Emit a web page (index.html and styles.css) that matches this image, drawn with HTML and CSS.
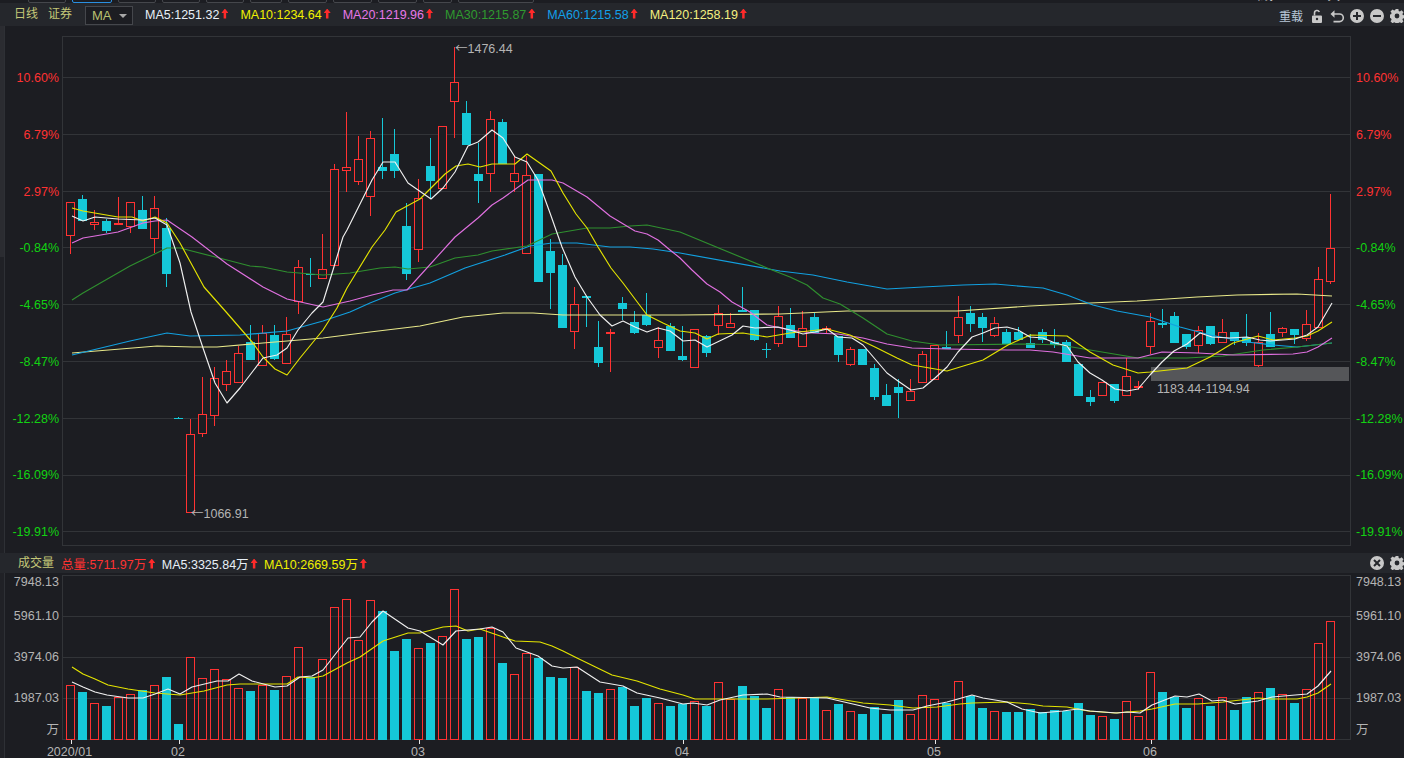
FILE: index.html
```html
<!DOCTYPE html>
<html>
<head>
    <meta charset="UTF-8">
    <title>日线 证券</title>
    <link rel="stylesheet" href="styles.css">
</head>
<body>
    <svg class="defs">
        <symbol id="ico-gear" viewBox="0 0 14 14">
            <path fill-rule="evenodd" d="M5.6 0h2.8l.3 1.900 1.200.5 1.600-1.100 2 2-1.100 1.600.5 1.200 1.900.3v2.800l-1.900.3-.5 1.200 1.100 1.600-2 2-1.600-1.100-1.200.5-.3 1.900H5.600l-.3-1.900-1.200-.5-1.600 1.100-2-2 1.100-1.600-.5-1.200L-.8 8.400V5.600l1.900-.3.5-1.200-1.100-1.600 2-2 1.600 1.100 1.200-.5zM7 4.600a2.400 2.400 0 1 0 0 4.800 2.400 2.400 0 0 0 0-4.800z"/>
        </symbol>
    </svg>

    <div class="tabstrip">
        <div class="tabs">
            <span class="tab">分时</span>
            <span class="tab active">日线</span>
            <span class="tab">周线</span>
            <span class="tab">月线</span>
            <span class="tab">季线</span>
            <span class="tab small">年线</span>
            <span class="tab mid">5分</span>
            <span class="tab mid">15分</span>
            <span class="tab mid">30分</span>
            <span class="tab tiny">60分</span>
            <span class="tab wide">多周期图</span>
        </div>
        <div class="tab-right">
            <span>画线</span>
            <span>工具</span>
        </div>
    </div>

    <div class="toolbar">
        <span class="title">日线</span>
        <span class="title">证券</span>
        <div class="select">MA<i class="caret"></i></div>
        <div class="legend">
            <span class="c-ma5">MA5:1251.32<i class="up"></i></span>
            <span class="c-ma10">MA10:1234.64<i class="up"></i></span>
            <span class="c-ma20">MA20:1219.96<i class="up"></i></span>
            <span class="c-ma30">MA30:1215.87<i class="up"></i></span>
            <span class="c-ma60">MA60:1215.58<i class="up"></i></span>
            <span class="c-ma120">MA120:1258.19<i class="up"></i></span>
        </div>
        <div class="tools top">
            <span class="reload">重载</span>
            <svg class="ico" viewBox="0 0 14 14"><path d="M3 6.500h8a1 1 0 0 1 1 1V13a1 1 0 0 1-1 1H3a1 1 0 0 1-1-1V7.500a1 1 0 0 1 1-1z"/><path class="line" d="M4.500 6.500V4a2.500 2.500 0 0 1 4.800-1"/><circle class="hole" cx="7" cy="10" r="1.200"/></svg>
            <svg class="ico" viewBox="0 0 14 14"><path class="line" d="M3 5h6.500a3.800 3.800 0 0 1 0 7.600H3.500"/><path d="M4.500 1.200v7.600L.5 5z"/></svg>
            <svg class="ico" viewBox="0 0 14 14"><path fill-rule="evenodd" d="M7 0a7 7 0 1 1 0 14A7 7 0 0 1 7 0zM6 3v3H3v2h3v3h2V8h3V6H8V3z"/></svg>
            <svg class="ico" viewBox="0 0 14 14"><path fill-rule="evenodd" d="M7 0a7 7 0 1 1 0 14A7 7 0 0 1 7 0zM3 6v2h8V6z"/></svg>
            <svg class="ico"><use href="#ico-gear"/></svg>
        </div>
    </div>

    <div class="panel">
        <div class="rail"><div class="thumb"></div></div>
        <div class="axis left">
            <span class="red">10.60%</span>
            <span class="red">6.79%</span>
            <span class="red">2.97%</span>
            <span class="green">-0.84%</span>
            <span class="green">-4.65%</span>
            <span class="green">-8.47%</span>
            <span class="green">-12.28%</span>
            <span class="green">-16.09%</span>
            <span class="green">-19.91%</span>
        </div>
        <svg class="chart" id="priceChart" viewBox="62 36 1289 510"></svg>
        <div class="axis right">
            <span class="red">10.60%</span>
            <span class="red">6.79%</span>
            <span class="red">2.97%</span>
            <span class="green">-0.84%</span>
            <span class="green">-4.65%</span>
            <span class="green">-8.47%</span>
            <span class="green">-12.28%</span>
            <span class="green">-16.09%</span>
            <span class="green">-19.91%</span>
        </div>
    </div>

    <div class="toolbar volbar">
        <span class="title">成交量</span>
        <div class="legend">
            <span class="c-total">总量:5711.97万<i class="up"></i></span>
            <span class="c-ma5">MA5:3325.84万<i class="up"></i></span>
            <span class="c-ma10">MA10:2669.59万<i class="up"></i></span>
        </div>
        <div class="tools">
            <svg class="ico" viewBox="0 0 14 14"><path fill-rule="evenodd" d="M7 0a7 7 0 1 1 0 14A7 7 0 0 1 7 0zM4.700 3.300 3.300 4.700 5.600 7 3.300 9.300l1.400 1.400L7 8.400l2.300 2.300 1.400-1.400L8.400 7l2.300-2.300-1.400-1.400L7 5.600z"/></svg>
            <svg class="ico"><use href="#ico-gear"/></svg>
        </div>
    </div>

    <div class="panel volume">
        <div class="rail"></div>
        <div class="vol-axis left">
            <span>7948.13</span>
            <span>5961.10</span>
            <span>3974.06</span>
            <span>1987.03</span>
            <span>万</span>
        </div>
        <svg class="chart" id="volumeChart" viewBox="62 575 1289 183"></svg>
        <div class="vol-axis right">
            <span>7948.13</span>
            <span>5961.10</span>
            <span>3974.06</span>
            <span>1987.03</span>
            <span>万</span>
        </div>
    </div>

    <script src="app.js"></script>
</body>
</html>
```

FILE: styles.css
```css
* {
    margin: 0;
    padding: 0;
    box-sizing: border-box;
}

body {
    width: 1404px;
    height: 758px;
    overflow: hidden;
    background: #1c1d22;
    color: #b4b4b4;
    font-family: "Liberation Sans", "Noto Sans CJK SC", sans-serif;
    font-size: 12.500px;
}

.defs {
    display: none;
}

/* tab row, only the bottom edge is in view */
.tabstrip {
    height: 3px;
    overflow: hidden;
    display: flex;
    justify-content: space-between;
    background: #1c1d22;
    color: #d0d0d0;
}
.tabs {
    display: flex;
    gap: 6px;
    padding-left: 28px;
    margin-top: -17px;
    height: 20px;
}
.tab {
    width: 38px;
    height: 20px;
    line-height: 19px;
    text-align: center;
    font-size: 12px;
    border: 1px solid #45474c;
    border-radius: 2px;
}
.tab.active {
    border-color: #2a8fe0;
    width: 40px;
}
.tab.mid {
    width: 39px;
}
.tab.small {
    width: 32px;
}
.tab.tiny {
    width: 29px;
}
.tab.wide {
    width: 76px;
}
.tab-right {
    display: flex;
    gap: 42px;
    padding-right: 64px;
    margin-top: -15px;
}

.toolbar {
    height: 23px;
    display: flex;
    align-items: center;
    background: #25272c;
    padding-left: 14px;
}
.title {
    color: #c4c878;
    margin-right: 10px;
    font-size: 12px;
    line-height: 23px;
}
.select {
    width: 48px;
    height: 19px;
    margin: 1px 12px 0 3px;
    padding-left: 6px;
    line-height: 18px;
    font-size: 13px;
    color: #b8c070;
    background: #1c1d22;
    border: 1px solid #45474c;
    position: relative;
}
.caret {
    position: absolute;
    right: 5px;
    top: 7px;
    border: 4.500px solid transparent;
    border-top-color: #a8a8a8;
    border-bottom: 0;
}
.legend {
    display: flex;
    gap: 12px;
    white-space: nowrap;
}
.up {
    display: inline-block;
    width: 7px;
    height: 10px;
    margin-left: 2px;
    background: #ff2a2a;
    clip-path: polygon(50% 0, 100% 45%, 68% 45%, 68% 100%, 32% 100%, 32% 45%, 0 45%);
}
.c-ma5 { color: #e8f0f8; }
.c-ma10 { color: #f0f000; }
.c-ma20 { color: #e878e8; }
.c-ma30 { color: #2f9a2f; }
.c-ma60 { color: #12a0e8; }
.c-ma120 { color: #f4f080; }
.c-total { color: #ff3232; }

.tools {
    margin-left: auto;
    display: flex;
    align-items: center;
    gap: 6px;
}
.tools.top {
    padding-top: 2px;
}
.reload {
    color: #b8c8d8;
    font-size: 12px;
    margin-right: 1px;
}
.ico {
    width: 14px;
    height: 14px;
    fill: #c8c8c8;
    overflow: visible;
}
.ico .line {
    fill: none;
    stroke: #c8c8c8;
    stroke-width: 1.600;
}
.ico .hole {
    fill: #25272c;
}

.panel {
    height: 527px;
    padding: 10px 0 7px;
    display: flex;
}
.rail {
    width: 5px;
    margin: -10px 0 -7px;
    background: #202126;
    border-right: 1px solid #2e3035;
}
.thumb {
    width: 4px;
    height: 231px;
    background: #2b2c31;
}
.chart {
    display: block;
    width: 1289px;
    height: 510px;
    flex: none;
    overflow: visible;
}

.axis {
    display: flex;
    flex-direction: column;
    gap: 36.750px;
    padding-top: 32px;
    line-height: 20px;
}
.axis span {
    height: 20px;
}
.axis.left,
.vol-axis.left {
    width: 57px;
    padding-right: 3px;
    text-align: right;
}
.axis.right,
.vol-axis.right {
    padding-left: 5px;
    white-space: nowrap;
}
.red { color: #ff3232; }
.green { color: #12d212; }

.volume {
    height: 185px;
    padding: 2px 0 0;
}
.volume .rail {
    margin: -2px 0 0;
}
.volume .chart {
    height: 183px;
}
.vol-axis {
    display: flex;
    flex-direction: column;
    line-height: 20px;
    gap: 21px;
    margin-top: -3px;
}
.vol-axis span {
    height: 20px;
}
.vol-axis span:first-child {
    margin-bottom: -7px;
}
.vol-axis span:last-child {
    margin-top: -9px;
}

.volbar {
    height: 20px;
    padding-left: 18px;
}
.volbar .title {
    margin-right: 7px;
    line-height: 20px;
}
.volbar .legend {
    gap: 6.500px;
}

.note {
    font-size: 12.500px;
    fill: #b4b4b4;
}
.note-arrow {
    font-family: "Noto Sans CJK SC", sans-serif;
}
```

FILE: app.js
```js
// every y and x below is in page pixels, the svg viewBox keeps them valid
const NS = 'http://www.w3.org/2000/svg';
const FIRST_X = 70.5;
const STEP = 12;

const RED = '#ff3232';
const CYAN = '#15c8d8';
const BG = '#1c1d22';
const GRID = '#323438';

// type, body top, body bottom, wick high, wick low
const candles = [
    ['r',202,235,202,254],['c',199,221,195,221],['r',222,224,210,230],['c',221,231,219,233],
    ['r',223,224,197,224],['r',202,226,202,233],['c',210,229,196,229],['r',208,238,196,253],
    ['c',228,274,218,287],['c',418,419,417,419],['r',434,512,419,512],['r',414,433,377,437],
    ['r',378,415,367,426],['r',371,384,360,391],['r',353,382,346,382],['c',342,360,325,360],
    ['r',333,365,325,365],['c',335,359,325,360],['r',334,363,317,363],['r',267,301,260,314],
    ['c',274,275,258,287],['r',269,278,234,278],['r',169,265,164,265],['r',167,170,112,192],
    ['r',159,181,136,185],['r',138,196,131,216],['c',167,171,118,179],['c',154,171,129,178],
    ['c',226,274,203,280],['r',198,249,179,262],['c',166,181,138,198],['r',126,188,126,188],
    ['r',82,101,47,138],['c',113,145,101,145],['c',174,181,143,203],['r',119,173,111,192],
    ['c',122,164,119,164],['r',173,181,156,192],['r',175,253,156,253],['c',174,282,174,282],
    ['c',251,273,239,309],['c',265,328,254,328],['r',304,331,287,349],['c',296,298,296,327],
    ['c',347,363,321,367],['r',332,333,329,372],['c',303,309,297,320],['c',322,333,311,334],
    ['c',315,325,293,326],['r',340,347,327,358],['c',326,351,323,351],['c',356,360,326,361],
    ['r',329,367,329,367],['c',336,353,335,357],['r',313,325,305,335],['r',323,327,313,328],
    ['c',310,312,287,312],['c',310,340,310,341],['c',349,350,343,358],['r',316,343,306,347],
    ['c',325,338,308,338],['r',328,346,311,346],['c',317,333,313,333],['r',328,329,326,333],
    ['c',336,355,336,362],['r',349,364,347,366],['c',349,365,349,365],['c',368,397,364,400],
    ['c',395,406,384,406],['c',387,393,379,418],['r',391,400,379,400],['r',354,382,351,382],
    ['r',345,379,345,379],['c',347,349,331,349],['r',317,335,296,343],['c',313,324,306,332],
    ['c',317,328,313,342],['r',323,335,317,337],['c',332,344,329,344],['c',332,340,327,340],
    ['c',343,348,334,348],['c',332,340,329,343],['c',342,345,329,348],['c',342,362,340,362],
    ['c',364,396,364,396],['c',397,402,390,406],['r',382,395,382,395],['c',384,401,384,403],
    ['r',376,395,358,395],['r',386,387,381,390],['r',321,346,313,354],['c',323,325,309,328],
    ['c',316,343,312,343],['c',334,347,334,349],['r',330,345,326,353],['c',326,344,326,345],
    ['r',332,342,319,343],['c',332,341,332,345],['c',337,343,314,346],['r',342,365,333,367],
    ['c',334,347,312,347],['r',328,332,327,337],['c',329,335,329,344],['r',324,338,310,341],
    ['r',279,327,267,327],['r',248,281,194,284]
];

const ma5 = [[72,216],[83,221],[95,217],[118,219],[143,220],[155,218],[167,225],[180,263],[191,312],[203,348],[215,383],[227,403],[240,388],[263,358],[277,355],[287,348],[298,330],[312,313],[323,302],[333,270],[343,237],[347,230],[358,208],[372,180],[383,162],[395,162],[408,183],[431,199],[443,188],[455,172],[468,146],[478,142],[492,130],[503,138],[515,157],[527,162],[538,180],[550,213],[562,247],[575,277],[587,297],[600,315],[612,326],[623,321],[635,327],[647,332],[658,328],[670,331],[683,341],[695,340],[707,347],[732,335],[743,326],[755,328],[778,327],[790,330],[803,334],[815,332],[827,329],[838,337],[852,338],[863,345],[887,373],[898,381],[911,390],[923,388],[935,378],[947,367],[958,352],[972,337],[983,333],[995,328],[1007,327],[1018,330],[1030,337],[1043,338],[1055,343],[1067,346],[1078,362],[1090,373],[1102,380],[1115,389],[1127,391],[1138,389],[1150,375],[1162,362],[1174,351],[1187,344],[1200,333],[1212,337],[1230,338],[1247,337],[1260,340],[1270,341],[1295,339],[1307,335],[1318,327],[1332,303]];
const ma10 = [[72,208],[83,211],[118,217],[132,217],[143,221],[155,217],[167,223],[180,243],[192,265],[204,287],[227,313],[240,328],[253,343],[263,357],[275,369],[287,375],[300,358],[323,330],[337,308],[347,288],[372,247],[385,230],[396,212],[420,199],[445,174],[456,166],[468,164],[480,167],[492,164],[515,164],[527,154],[551,171],[563,193],[576,214],[587,228],[598,247],[611,268],[623,283],[647,315],[663,323],[680,331],[695,333],[707,339],[718,334],[743,333],[767,337],[790,333],[827,329],[850,335],[877,348],[897,358],[912,365],[947,371],[983,360],[1008,345],[1030,335],[1067,336],[1090,352],[1113,365],[1138,373],[1150,372],[1187,368],[1210,357],[1233,343],[1258,336],[1273,340],[1295,338],[1307,336],[1318,331],[1332,322]];
const ma20 = [[72,243],[83,238],[95,236],[118,232],[143,223],[155,221],[167,220],[192,237],[227,264],[263,287],[287,299],[323,307],[350,301],[372,295],[393,290],[407,290],[455,237],[478,218],[492,205],[503,198],[528,180],[552,180],[563,183],[587,197],[610,216],[635,231],[647,234],[658,240],[670,250],[680,258],[692,270],[707,284],[720,292],[732,302],[750,312],[767,325],[790,330],[813,333],[838,334],[863,338],[887,344],[912,348],[947,349],[1007,350],[1030,350],[1053,352],[1090,358],[1113,358],[1138,358],[1162,352],[1198,353],[1233,355],[1293,354],[1307,352],[1318,347],[1332,338]];
const ma30 = [[72,300],[83,293],[130,266],[167,248],[180,248],[227,260],[250,266],[263,267],[287,272],[323,275],[350,273],[380,268],[395,267],[408,269],[430,267],[455,258],[478,255],[492,251],[527,246],[552,234],[587,228],[610,228],[630,226],[647,225],[680,232],[772,270],[790,277],[807,285],[823,298],[840,304],[863,318],[887,334],[912,341],[940,345],[1030,344],[1060,345],[1090,350],[1138,358],[1187,358],[1223,356],[1263,350],[1297,347],[1332,343]];
const ma60 = [[72,355],[130,341],[167,333],[190,336],[240,335],[287,331],[323,321],[350,312],[370,303],[395,293],[430,283],[465,268],[505,255],[530,246],[552,243],[577,243],[610,247],[630,247],[653,249],[680,253],[780,271],[813,275],[847,282],[887,289],[923,287],[963,285],[995,284],[1030,287],[1043,288],[1067,295],[1093,305],[1117,311],[1150,317],[1180,327],[1210,335],[1247,342],[1273,345],[1297,347],[1332,343]];
const ma120 = [[72,353],[157,346],[193,347],[217,347],[263,343],[323,338],[370,332],[420,326],[463,317],[503,313],[533,313],[563,315],[680,315],[780,314],[847,311],[957,311],[1030,306],[1090,303],[1137,301],[1197,297],[1237,295],[1297,294],[1332,296]];

// type, top of the bar (all bars stand on y 739)
const volumes = [
    ['r',685],['c',692],['r',703],['c',706],['r',697],['r',694],['c',690],['r',685],['c',677],['c',724],
    ['r',657],['r',678],['r',669],['r',679],['r',688],['c',691],['r',685],['c',690],['r',676],['r',647],
    ['c',677],['r',659],['r',607],['r',599],['r',640],['r',600],['c',611],['c',651],['c',639],['r',648],
    ['c',643],['r',636],['r',589],['c',639],['c',637],['r',628],['c',663],['r',674],['r',653],['c',658],
    ['c',677],['c',678],['r',667],['c',691],['c',693],['r',689],['c',687],['c',706],['c',698],['r',703],
    ['c',706],['c',704],['r',701],['c',706],['r',682],['r',699],['c',686],['c',696],['c',708],['r',689],
    ['c',697],['r',698],['c',697],['r',710],['c',704],['r',711],['c',714],['c',707],['c',714],['c',700],
    ['r',714],['r',695],['r',699],['c',703],['r',681],['c',696],['c',708],['r',711],['c',712],['c',712],
    ['c',709],['c',712],['c',710],['c',711],['c',703],['c',715],['r',716],['c',719],['r',701],['r',716],
    ['r',672],['c',692],['c',697],['c',708],['r',698],['c',706],['r',697],['c',710],['c',697],['r',692],
    ['c',688],['r',694],['c',703],['r',689],['r',643],['r',621]
];

const volMa5 = [[72,682],[83,687],[95,692],[107,695],[128,698],[143,698],[155,694],[168,689],[180,694],[192,687],[217,681],[228,681],[239,674],[252,681],[275,687],[287,686],[300,677],[312,676],[323,670],[348,638],[360,637],[372,622],[383,611],[408,628],[420,631],[443,645],[456,631],[480,629],[492,627],[503,632],[516,648],[538,656],[552,666],[563,668],[577,667],[600,682],[623,686],[637,693],[660,698],[683,704],[693,703],[707,705],[720,700],[743,695],[767,694],[780,697],[827,698],[870,708],[890,710],[913,710],[927,706],[947,702],[958,699],[972,695],[983,698],[1007,702],[1022,709],[1040,713],[1063,711],[1078,709],[1090,711],[1117,713],[1127,712],[1140,713],[1152,705],[1175,696],[1187,697],[1199,694],[1212,701],[1223,700],[1235,704],[1258,701],[1272,697],[1307,694],[1318,686],[1331,671]];
const volMa10 = [[72,667],[83,674],[95,679],[108,685],[128,689],[155,693],[180,695],[204,691],[227,685],[240,684],[287,684],[298,677],[312,678],[323,676],[347,663],[360,657],[383,641],[408,633],[420,633],[443,627],[456,626],[468,631],[480,629],[503,637],[515,641],[540,642],[552,646],[563,651],[577,658],[612,675],[637,681],[660,689],[683,695],[695,699],[707,699],[743,699],[767,699],[827,697],[863,703],[890,705],[913,708],[937,707],[960,704],[972,703],[1007,702],[1030,704],[1043,706],[1067,707],[1088,711],[1115,713],[1140,711],[1152,709],[1175,704],[1198,704],[1223,702],[1258,698],[1272,699],[1297,699],[1307,697],[1318,693],[1331,684]];

const months = [
    { label: '2020/01', tick: 71.5, x: 69.5 },
    { label: '02', tick: 179.5, x: 178 },
    { label: '03', tick: 419.5, x: 418 },
    { label: '04', tick: 683.5, x: 682 },
    { label: '05', tick: 935.5, x: 934 },
    { label: '06', tick: 1151.5, x: 1150 }
];

function add(svg, tag, attrs, text) {
    const el = document.createElementNS(NS, tag);
    for (const key in attrs) {
        el.setAttribute(key, attrs[key]);
    }
    if (text) {
        el.textContent = text;
    }
    svg.appendChild(el);
    return el;
}

function hline(svg, y) {
    add(svg, 'line', { x1: 62, x2: 1350, y1: y, y2: y, stroke: GRID, 'shape-rendering': 'crispEdges' });
}

function frame(svg, top, bottom) {
    add(svg, 'rect', {
        x: 62.5, y: top, width: 1288, height: bottom - top,
        fill: 'none', stroke: GRID, 'shape-rendering': 'crispEdges'
    });
}

function maLine(svg, points, color) {
    add(svg, 'polyline', {
        points: points.join(' '), fill: 'none', stroke: color,
        'stroke-width': 1.15, 'stroke-linejoin': 'round'
    });
}

function drawCandle(svg, c, i) {
    const x = FIRST_X + i * STEP;
    const color = c[0] === 'r' ? RED : CYAN;
    add(svg, 'line', {
        x1: x, x2: x, y1: c[3], y2: c[4], stroke: color, 'shape-rendering': 'crispEdges'
    });
    if (c[0] === 'r') {
        add(svg, 'rect', {
            x: x - 4, y: c[1] + 0.5, width: 8, height: Math.max(c[2] - c[1], 1) - 0.5,
            fill: BG, stroke: color, 'shape-rendering': 'crispEdges'
        });
    } else {
        add(svg, 'rect', {
            x: x - 4.5, y: c[1], width: 9, height: Math.max(c[2] - c[1], 1),
            fill: color, 'shape-rendering': 'crispEdges'
        });
    }
}

function drawBar(svg, v, i) {
    const x = FIRST_X + i * STEP;
    if (v[0] === 'r') {
        add(svg, 'rect', {
            x: x - 4, y: v[1] + 0.5, width: 8, height: 739 - v[1],
            fill: 'none', stroke: RED, 'shape-rendering': 'crispEdges'
        });
    } else {
        add(svg, 'rect', {
            x: x - 4.5, y: v[1], width: 9, height: 740 - v[1],
            fill: CYAN, 'shape-rendering': 'crispEdges'
        });
    }
}

// high / low price mark with the wide arrow in front of it
function priceMark(svg, x, y, text) {
    const label = add(svg, 'text', { x: x, y: y, class: 'note' });
    add(label, 'tspan', { class: 'note-arrow' }, '←');
    add(label, 'tspan', {}, text);
}

const price = document.getElementById('priceChart');
frame(price, 36.5, 545.5);
[77.5, 134.5, 191.5, 247.5, 304.5, 361.5, 418.5, 475.5, 531.5].forEach(y => hline(price, y));
add(price, 'rect', { x: 1151, y: 367, width: 198, height: 14, fill: '#555659' });
candles.forEach((c, i) => drawCandle(price, c, i));
maLine(price, ma120, '#e8e88a');
maLine(price, ma60, '#12a0e0');
maLine(price, ma30, '#2f8f2f');
maLine(price, ma20, '#e070e0');
maLine(price, ma10, '#e4e400');
maLine(price, ma5, '#f0f0f0');
priceMark(price, 455, 53, '1476.44');
priceMark(price, 191, 518, '1066.91');
add(price, 'text', { x: 1157, y: 393, class: 'note' }, '1183.44-1194.94');

const volume = document.getElementById('volumeChart');
frame(volume, 575.5, 739.5);
[616.5, 657.5, 698.5].forEach(y => hline(volume, y));
volumes.forEach((v, i) => drawBar(volume, v, i));
maLine(volume, volMa10, '#e4e400');
maLine(volume, volMa5, '#f0f0f0');
months.forEach(m => {
    add(volume, 'line', {
        x1: m.tick, x2: m.tick, y1: 740, y2: 744, stroke: '#e8e8e8', 'shape-rendering': 'crispEdges'
    });
    add(volume, 'text', { x: m.x, y: 756, 'text-anchor': 'middle', class: 'note' }, m.label);
});
```
